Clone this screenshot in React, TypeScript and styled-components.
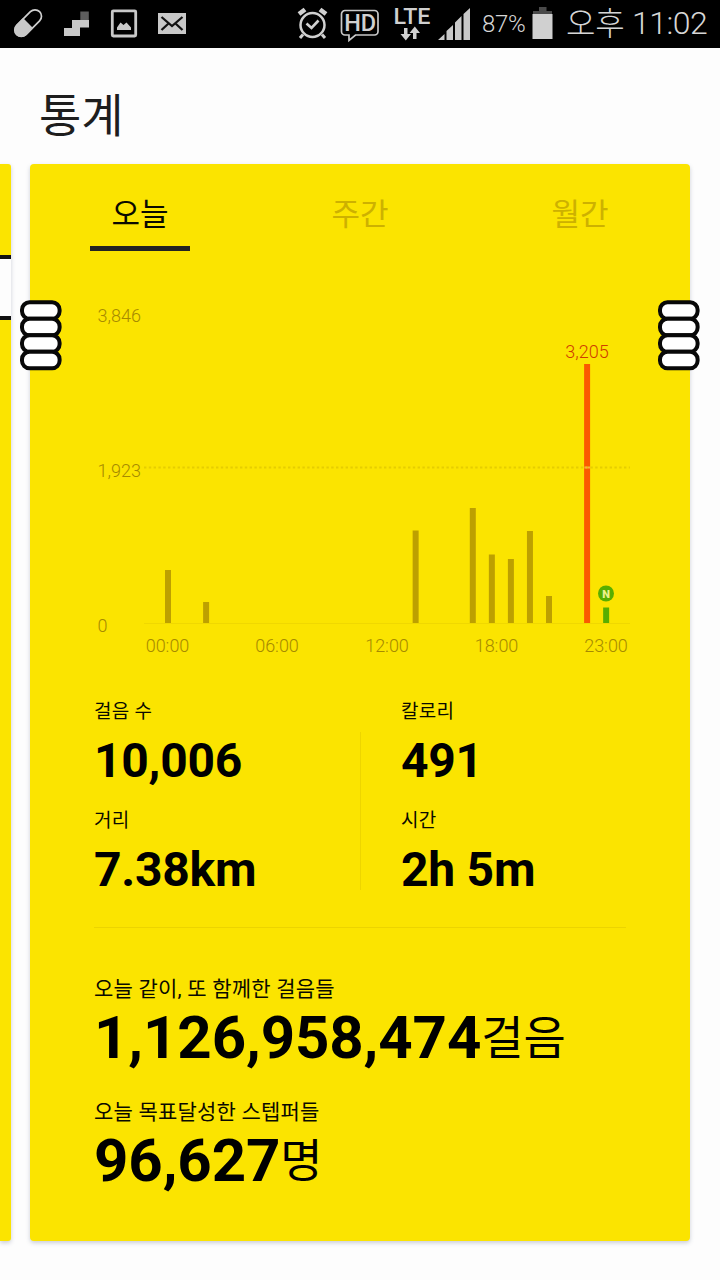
import React from "react";
import styled, { createGlobalStyle } from "styled-components";

const YELLOW = "#fbe400";
const MUTED = "#bda000";
const FONT = `Roboto, "Noto Sans CJK KR", sans-serif`;

const GlobalStyle = createGlobalStyle`
  * { box-sizing: border-box; }
  body { margin: 0; background: #fdfdfd; font-family: ${FONT}; overflow: hidden; }
`;

const Screen = styled.div`
  width: 720px;
  height: 1280px;
  overflow: hidden;
  display: flex;
  flex-direction: column;
  background: #fdfdfd;
`;

const StatusBar = styled.header`
  height: 48px;
  flex: none;
  display: flex;
  justify-content: space-between;
  background: #000;
  color: #d6d6d6;
`;

const Notifications = styled.div`
  display: flex;
  padding-left: 4px;
`;

const SystemTray = styled.div`
  display: flex;
  align-items: center;
`;

const StatusIcon = styled.svg<{ $gap?: number }>`
  display: block;
  flex: none;
  margin-right: ${(p) => p.$gap ?? 0}px;
`;

const Battery = styled.span`
  width: 50px;
  font-size: 24px;
  font-weight: 300;
  line-height: 48px;
  letter-spacing: -0.3px;
  white-space: nowrap;
`;

const Clock = styled.time`
  display: flex;
  width: 154px;
  font-size: 32px;
  font-weight: 300;
  line-height: 50px;
  letter-spacing: -0.5px;
  white-space: nowrap;
`;

const Meridiem = styled.span`
  width: 66px;
  font-size: 32px;
  line-height: 52px;
  letter-spacing: -0.3px;
`;

const Title = styled.h1`
  margin: 0;
  height: 116px;
  padding: 38px 0 0 39px;
  font-size: 46px;
  font-weight: 400;
  line-height: 60px;
  color: #1e1e1e;
`;

const Pager = styled.main`
  display: flex;
  gap: 19px;
`;

const PreviousCard = styled.section`
  flex: none;
  width: 11px;
  height: 1077px;
  padding-top: 91px;
  border-radius: 0 3px 3px 0;
  background: ${YELLOW};
  box-shadow: 0 2px 4px rgba(90, 100, 130, 0.3);
`;

const PreviousBox = styled.div`
  height: 65px;
  border: solid #111;
  border-width: 4px 0;
  background: #fdfdfd;
`;

const Card = styled.section`
  position: relative;
  flex: none;
  width: 660px;
  height: 1077px;
  border-radius: 4px;
  background: ${YELLOW};
  box-shadow: 0 2px 4px rgba(90, 100, 130, 0.3);
`;

const Ring = styled.svg<{ $side: "left" | "right" }>`
  position: absolute;
  top: 136px;
  ${(p) => p.$side}: -10px;
`;

const Tabs = styled.nav`
  display: grid;
  grid-template-columns: repeat(3, 1fr);
  height: 87px;
`;

const Tab = styled.div<{ $active?: boolean }>`
  display: flex;
  flex-direction: column;
  align-items: center;
  justify-content: space-between;
  padding-top: 31px;
  font-size: 31px;
  line-height: 40px;
  color: ${(p) => (p.$active ? "#0a0a00" : "#cdb100")};
  &::after {
    content: "";
    width: 100px;
    height: 5.5px;
    background: ${(p) => (p.$active ? "#222" : "transparent")};
  }
`;

const Chart = styled.svg`
  display: block;
  font-size: 18px;
  font-weight: 300;
`;

const Stats = styled.div`
  display: grid;
  grid-template-columns: 266px 41px 1fr;
  margin: 29px 64px 0;
`;

const StatColumn = styled.div`
  display: flex;
  flex-direction: column;
  gap: 24px;
`;

const ColumnRule = styled.i`
  width: 1px;
  height: 158px;
  margin: 32px 0 0 -0.5px;
  background: #edd500;
`;

const Stat = styled.div`
  display: flex;
  flex-direction: column;
  gap: 13px;
`;

const StatLabel = styled.div`
  font-size: 19px;
  line-height: 24px;
  letter-spacing: 0.25px;
  color: #0a0a00;
  white-space: nowrap;
`;

const StatValue = styled.div`
  font-size: 48px;
  font-weight: 700;
  line-height: 48px;
  letter-spacing: -0.25px;
  color: #000;
  white-space: nowrap;
`;

const Rule = styled.hr`
  height: 1px;
  margin: 33px 64px 49px;
  border: 0;
  background: #ecd400;
`;

const Totals = styled.div`
  display: flex;
  flex-direction: column;
  gap: 32px;
  padding-left: 64px;
`;

const Total = styled.div`
  display: flex;
  flex-direction: column;
  gap: 7px;
`;

const TotalLabel = styled(StatLabel)`
  font-size: 21px;
  letter-spacing: 0.2px;
`;

const TotalValue = styled(StatValue)`
  height: 60px;
  font-size: 60px;
  line-height: 60px;
  letter-spacing: -0.1px;
`;

const Unit = styled.span`
  font-size: 46px;
  font-weight: 400;
  line-height: 0;
  vertical-align: 4px;
`;

const BASELINE = 372;
const bars = [
  { hour: 0, h: 53 },
  { hour: 2, h: 21 },
  { hour: 13, h: 92.5 },
  { hour: 16, h: 115 },
  { hour: 17, h: 68.5 },
  { hour: 18, h: 64 },
  { hour: 19, h: 92 },
  { hour: 20, h: 27 },
  { hour: 22, h: 259, fill: "#fa5a00" },
  { hour: 23, h: 15.5, fill: "#58ae00" },
];
const barX = (hour: number) => 135 + hour * 19.05;

const times = [
  { x: 137.5, t: "00:00" },
  { x: 247, t: "06:00" },
  { x: 357, t: "12:00" },
  { x: 466.5, t: "18:00" },
  { x: 576, t: "23:00" },
];

function StepChart() {
  return (
    <Chart width="660" height="420" viewBox="0 0 660 420">
      <g fill="#a68a00">
        <text x="67.5" y="71">3,846</text>
        <text x="67.5" y="226">1,923</text>
        <text x="67.5" y="381">0</text>
        {times.map((l) => (
          <text key={l.t} x={l.x} y="400.5" textAnchor="middle">{l.t}</text>
        ))}
      </g>
      <path d={`M114 ${BASELINE + 0.5}H600`} stroke="#f0d800" />
      {bars.map((b) => (
        <rect key={b.hour} x={barX(b.hour)} y={BASELINE - b.h} width="6" height={b.h} fill={b.fill ?? MUTED} />
      ))}
      <path d="M114 216.5H600" stroke="#e6cd00" strokeWidth="2" strokeDasharray="2.4 2.4" />
      <path d="M554.400 216.500H560" stroke="#fbb040" strokeWidth="2" strokeDasharray="2.4 1" />
      <text x="557" y="107" textAnchor="middle" fill="#d03c00">3,205</text>
      <circle cx="576" cy="342.500" r="8" fill="#58ae00" />
      <text x="576" y="346.500" textAnchor="middle" fontSize="11" fontWeight="900" fill="#eef08a">N</text>
    </Chart>
  );
}

function Binding({ side }: { side: "left" | "right" }) {
  return (
    <Ring $side={side} width="42" height="71" viewBox="0 0 42 71">
      {[0, 1, 2, 3].map((i) => (
        <rect key={i} x="2" y={2.3 + i * 16.5} width={37.6} height="16.5" rx="7.5" fill="#fff" stroke="#080808" strokeWidth="4" />
      ))}
    </Ring>
  );
}

export default function App() {
  return (
    <Screen>
      <GlobalStyle />
      <StatusBar>
        <Notifications>
          <StatusIcon width="48" height="48" viewBox="0 0 48 48">
            <g transform="rotate(-45 24 23)">
              <rect x="7.800" y="16.700" width="32.400" height="13" rx="6.500" fill="none" stroke="#d0d0d0" strokeWidth="1.700" />
              <path d="M24 16H14.500a7 7 0 0 0 0 14.400H24z" fill="#c8c8c8" />
            </g>
          </StatusIcon>
          <StatusIcon width="48" height="48" viewBox="0 0 48 48">
            <path d="M12 28h8v-8h8.500h8.500v7.500h-9v8.500H12z" fill="#c8c8c8" />
            <rect x="28.300" y="11.500" width="8.500" height="8.500" fill="#5e5e5e" />
          </StatusIcon>
          <StatusIcon width="48" height="48" viewBox="0 0 48 48">
            <rect x="12.300" y="10.800" width="23.400" height="25.200" rx="1" fill="none" stroke="#c8c8c8" strokeWidth="2.800" />
            <path d="M17 30v-2.500l3.500-5 3 2.500 3-2.500 4.500 5V30z" fill="#c8c8c8" />
          </StatusIcon>
          <StatusIcon width="48" height="48" viewBox="0 0 48 48">
            <rect x="10" y="13" width="28" height="21" fill="#c8c8c8" />
            <path d="M13.500 17l10.500 9L34.500 17M13.500 30l7-6.500M34.500 30L27.500 23.500" fill="none" stroke="#111" strokeWidth="2.300" />
          </StatusIcon>
        </Notifications>
        <SystemTray>
          <StatusIcon $gap={12} width="31" height="48" viewBox="0 0 31 48">
            <g fill="none" stroke="#d0d0d0">
              <circle cx="15.500" cy="25" r="12" strokeWidth="2.500" />
              <path d="M9.500 23.500l5 4.500 7-7.500" strokeWidth="2.600" />
              <path d="M2 14l6-4.500M29 14l-6-4.500" strokeWidth="4.600" />
              <path d="M6 34.500l-3 3.500M25 34.500l3 3.500" strokeWidth="3" />
            </g>
          </StatusIcon>
          <StatusIcon $gap={13} width="40" height="48" viewBox="0 0 40 48">
            <path d="M5 10.500H34.500a3.500 3.500 0 0 1 3.500 3.500V31.500a3.500 3.500 0 0 1-3.500 3.500H15.500L9 40.500V35H5a3.500 3.500 0 0 1-3.500-3.500V14a3.500 3.500 0 0 1 3.500-3.500z" fill="none" stroke="#c8c8c8" strokeWidth="1.700" />
            <text x="4.200" y="31" fontSize="23" fontWeight="500" textLength="32" lengthAdjust="spacingAndGlyphs" fill="#d0d0d0">HD</text>
          </StatusIcon>
          <StatusIcon $gap={7} width="38" height="48" viewBox="0 0 38 48">
            <text x="0.500" y="23.500" fontSize="22" fontWeight="500" textLength="37" lengthAdjust="spacingAndGlyphs" fill="#d0d0d0">LTE</text>
            <path d="M11 28h3.500v6h3.500l-5.200 6.500L7.500 34H11zM20 39h3.500v-6H27l-5.200-6.500L16.500 33H20z" fill="#d0d0d0" />
          </StatusIcon>
          <StatusIcon $gap={11} width="33" height="48" viewBox="0 0 33 48">
            <path d="M0 40l6.500-6v6zM8.500 40V31l6.500-6V40zM17 40V22.500l6.500-6.500v24zM25.500 40V14l6.500-6v32z" fill="#c8c8c8" />
          </StatusIcon>
          <Battery>87%</Battery>
          <StatusIcon $gap={13} width="21" height="48" viewBox="0 0 21 48">
            <path d="M7 7h7.500v4H20v3H1v-3h6z" fill="#4a4a4a" />
            <rect x="0.500" y="14" width="20" height="25" fill="#d0d0d0" />
          </StatusIcon>
          <Clock>
            <Meridiem>오후</Meridiem>
            <span>11:02</span>
          </Clock>
        </SystemTray>
      </StatusBar>
      <Title>통계</Title>
      <Pager>
        <PreviousCard>
          <PreviousBox />
        </PreviousCard>
        <Card>
          <Tabs>
            <Tab $active>오늘</Tab>
            <Tab>주간</Tab>
            <Tab>월간</Tab>
          </Tabs>
          <StepChart />
          <Stats>
            <StatColumn>
              <Stat>
                <StatLabel>걸음 수</StatLabel>
                <StatValue>10,006</StatValue>
              </Stat>
              <Stat>
                <StatLabel>거리</StatLabel>
                <StatValue>7.38km</StatValue>
              </Stat>
            </StatColumn>
            <ColumnRule />
            <StatColumn>
              <Stat>
                <StatLabel>칼로리</StatLabel>
                <StatValue>491</StatValue>
              </Stat>
              <Stat>
                <StatLabel>시간</StatLabel>
                <StatValue>2h 5m</StatValue>
              </Stat>
            </StatColumn>
          </Stats>
          <Rule />
          <Totals>
            <Total>
              <TotalLabel>오늘 같이, 또 함께한 걸음들</TotalLabel>
              <TotalValue>1,126,958,474<Unit>걸음</Unit></TotalValue>
            </Total>
            <Total>
              <TotalLabel>오늘 목표달성한 스텝퍼들</TotalLabel>
              <TotalValue>96,627<Unit>명</Unit></TotalValue>
            </Total>
          </Totals>
          <Binding side="left" />
          <Binding side="right" />
        </Card>
      </Pager>
    </Screen>
  );
}
